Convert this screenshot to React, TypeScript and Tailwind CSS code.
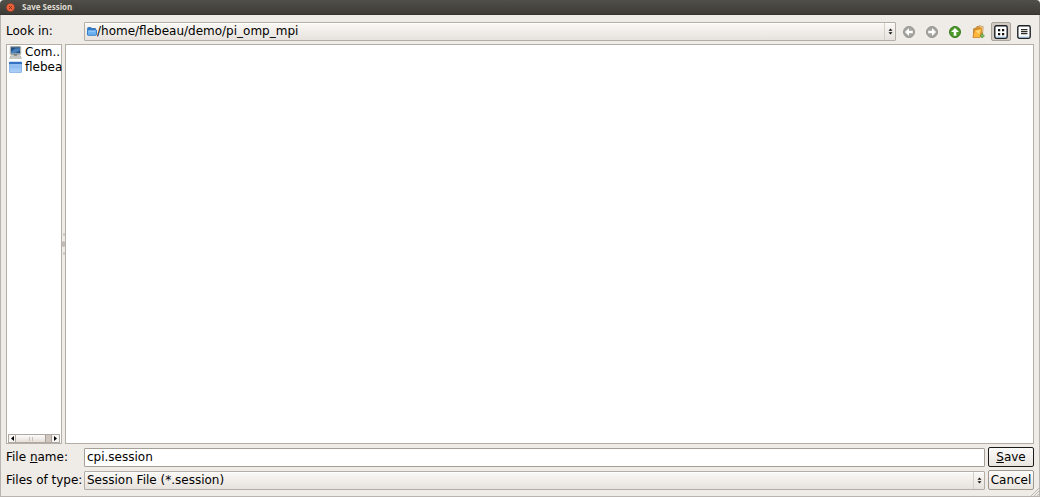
import { useState } from 'react';
import type { ReactNode } from 'react';
import clsx from 'clsx';

const path = '/home/flebeau/demo/pi_omp_mpi';

function TitleBar({ title }: { title: string }) {
    return (
        <header className="flex h-[15px] shrink-0 items-center gap-[7px] rounded-t-[4px] border-b border-[#33322e] bg-linear-to-b from-[#504f49] to-[#3d3c37] px-[6px]">
            <button aria-label="Close" className="size-[9px]">
                <svg viewBox="0 0 9 9" className="size-[9px]">
                    <circle cx="4.5" cy="4.5" r="4.2" fill="#e9603a" stroke="#6f3a28" strokeWidth=".6" />
                    <path d="M3 3l3 3M6 3L3 6" stroke="#7d3420" strokeWidth=".9" />
                </svg>
            </button>
            <h1 className="font-['Open_Sans',sans-serif] text-[8px] leading-[10px] font-bold text-[#dfdbd2]">{title}</h1>
        </header>
    );
}

function FolderIcon({ className }: { className?: string }) {
    return (
        <svg viewBox="0 0 10 9" className={className}>
            <path d="M.5 1.5q0-1 1-1h2.5l.8 1h3.7v1H.5z" fill="#2f7fd0" stroke="#1c62b0" strokeWidth=".7" />
            <path d="M.5 8V3h9v4.5q0 .8-.8.8H1z" fill="#6db2f0" stroke="#1d6cc0" strokeWidth=".8" />
            <path d="M1.5 4h7" stroke="#b6dcfb" strokeWidth=".8" />
        </svg>
    );
}

function ComputerIcon() {
    return (
        <svg viewBox="0 0 13 13" className="size-[13px] shrink-0">
            <rect x="1.3" y=".5" width="10.4" height="8" rx=".6" fill="#d5d6d2" stroke="#8b8d88" strokeWidth=".7" />
            <rect x="2" y="1.2" width="9" height="6.2" fill="#204f86" />
            <path d="M2.2 5.4l4-2.8 4.6-.4v2.2L6 7.2H2.2z" fill="#4a80b8" />
            <path d="M4.8 8.5h3.4v1.3H4.8z" fill="#555753" />
            <path d="M1.8 9.8h9.4l1.2 2.5H.6z" fill="#e4e5e2" stroke="#8b8d88" strokeWidth=".6" />
            <path d="M2.2 11h8.6" stroke="#9b9d98" strokeWidth=".6" />
        </svg>
    );
}

function HomeFolderIcon() {
    return (
        <svg viewBox="0 0 13 12" className="h-[12px] w-[13px] shrink-0">
            <defs>
                <linearGradient id="home-folder" x1="0" y1="0" x2="0" y2="1">
                    <stop offset="0" stopColor="#6fa8ea" />
                    <stop offset="1" stopColor="#b3d5fa" />
                </linearGradient>
            </defs>
            <rect x=".4" y="1" width="12.2" height="10.4" rx=".5" fill="url(#home-folder)" stroke="#6a9fdd" strokeWidth=".7" />
            <path d="M.1 1h12.8v2.2H.1z" fill="#3273c4" />
            <path d="M.8 3.9h11.4" stroke="#c5e0fc" strokeWidth=".7" />
        </svg>
    );
}

function ArrowIcon({ direction }: { direction: 'left' | 'right' | 'up' }) {
    const rotation = { left: 0, right: 180, up: 90 }[direction];
    const up = direction === 'up';
    return (
        <svg viewBox="0 0 12 12" className="size-[12px]">
            <circle cx="6" cy="6" r="5.5" fill={up ? '#4e9a2a' : '#a5a4a1'} stroke={up ? '#2d7413' : '#8f8e8b'} strokeWidth=".9" />
            <path
                d="M6 2L2 6l4 4V7.3h3.8V4.7H6z"
                fill="#fff"
                transform={`rotate(${rotation} 6 6)`}
            />
        </svg>
    );
}

function NewFolderIcon() {
    return (
        <svg viewBox="0 0 13 14" className="h-[14px] w-[13px]">
            <path d="M1.6 3.8l2.6-.9.8-1.5 1.6.3.6-1 3.9 1.1-.7 9.2-8.9 1z" fill="#dc9633" stroke="#a97227" strokeWidth=".7" />
            <path d="M7.5 1.5l2.9.8-.5 5" fill="none" stroke="#f7e8c8" strokeWidth=".9" />
            <path d="M.9 12.4L2.6 5l6.6-1.7.5 1-1.6 8.3z" fill="#ffb83c" stroke="#c67c1c" strokeWidth=".7" />
            <path d="M3.4 6l4.8-1.3-.8 4.2z" fill="#ffd67c" />
            <path d="M10.2 8.6v4.4M8 10.8h4.4" stroke="#5d9a40" strokeWidth="1.9" />
            <path d="M10.2 9.4v2.8M8.8 10.8h2.8" stroke="#8fc66d" strokeWidth=".8" />
        </svg>
    );
}

function ViewIcon({ detail }: { detail?: boolean }) {
    return (
        <svg viewBox="0 0 14 14" className="size-[14px]">
            <rect x=".8" y=".8" width="12.4" height="12.4" rx="1.6" fill="#fff" stroke="#1c2228" strokeWidth="1.4" />
            <path d="M2 12h10" stroke="#a8cdec" strokeWidth="1" />
            {detail ? (
                <>
                    <path d="M4 4h6.4v6H4z" fill="#c9c9c9" />
                    <path d="M4 4.5h6.4M4 6.5h6.4M4 8.5h6.4" stroke="#2a2a2a" strokeWidth="1" />
                </>
            ) : (
                <path d="M4 4h2.2v2.2H4zM8 4h2.2v2.2H8zM4 8h2.2v2.2H4zM8 8h2.2v2.2H8z" fill="#111" />
            )}
        </svg>
    );
}

function ToolButton({ label, pressed, onClick, children }: { label: string; pressed?: boolean; onClick?: () => void; children: ReactNode }) {
    return (
        <button
            aria-label={label}
            aria-pressed={pressed}
            onClick={onClick}
            className={clsx(
                'flex h-[19px] w-[20px] items-center justify-center rounded-[2px] border',
                pressed ? 'border-[#aaa39a] bg-[#d2cbc4]' : 'border-transparent',
            )}
        >
            {children}
        </button>
    );
}

interface ComboProps {
    id: string;
    value: string;
    icon?: ReactNode;
}

function Combo({ id, value, icon }: ComboProps) {
    return (
        <div className="relative flex h-[19px] min-w-0 flex-1 items-center rounded-[1px] border border-[#b5aea6] bg-linear-to-b from-[#faf8f6] to-[#e7e2dd] shadow-[inset_0_1px_0_#fff]">
            {icon && <span className="pointer-events-none absolute left-[2px]">{icon}</span>}
            <select
                id={id}
                defaultValue={value}
                className={clsx('h-full w-full appearance-none bg-transparent pr-[14px] pb-px outline-none', icon ? 'pl-[12px]' : 'pl-[2px]')}
            >
                <option>{value}</option>
            </select>
            <span className="pointer-events-none absolute right-0 flex h-full w-[11px] items-center justify-center border-l border-[#d5cec7]">
                <svg viewBox="0 0 5 7" className="h-[7px] w-[5px]">
                    <path d="M2.5 .4L4.5 2.7H.5zM2.5 6.6L.5 4.3h4z" fill="#111" />
                </svg>
            </span>
        </div>
    );
}

function ScrollBar() {
    return (
        <div className="mx-px flex h-[9px] shrink-0 border border-[#b0a9a1] bg-[#d0c6bf]">
            <button aria-label="Scroll left" className="flex w-[7px] shrink-0 items-center justify-center border-r border-[#b0a9a1] bg-[#f8f6f4]">
                <svg viewBox="0 0 3 5" className="h-[5px] w-[3px]"><path d="M3 0v5L0 2.5z" /></svg>
            </button>
            <div className="flex flex-1 items-center justify-center gap-[2px] bg-linear-to-b from-[#fcfbfa] to-[#e5dfda]">
                <span className="h-[4px] w-px bg-[#c8c1ba]" />
                <span className="h-[4px] w-px bg-[#c8c1ba]" />
            </div>
            <div className="w-[7px] border-x border-[#a8a098]" />
            <button aria-label="Scroll right" className="flex w-[7px] shrink-0 items-center justify-center bg-[#f8f6f4]">
                <svg viewBox="0 0 3 5" className="h-[5px] w-[3px]"><path d="M0 0v5l3-2.5z" /></svg>
            </button>
        </div>
    );
}

function Places() {
    return (
        <aside className="flex w-[56px] shrink-0 flex-col border border-[#b5aea6] bg-white">
            <ul className="flex-1">
                <li className="flex h-[14px] items-center gap-[3px] pl-[2px]">
                    <ComputerIcon />
                    <span className="whitespace-nowrap">Com..</span>
                </li>
                <li className="flex h-[15px] items-center gap-[3px] pl-[2px]">
                    <HomeFolderIcon />
                    <span className="whitespace-nowrap">flebea</span>
                </li>
            </ul>
            <ScrollBar />
        </aside>
    );
}

function Splitter() {
    return (
        <div className="flex w-[3px] shrink-0 flex-col items-center justify-center gap-[5px]">
            <span className="h-[3px] w-[2px] rounded-full bg-[#cbc6c1]" />
            <span className="h-[6px] w-[3px] rounded-full bg-[#c2bdb8]" />
            <span className="h-[3px] w-[2px] rounded-full bg-[#cbc6c1]" />
        </div>
    );
}

const labelClass = 'w-[78px] shrink-0 pb-px whitespace-nowrap';
const buttonClass = 'ml-[3px] h-[20px] w-[46px] shrink-0 rounded-[2px] border bg-linear-to-b from-[#fcfbfa] to-[#e9e4df] pb-px text-center';

export default function App() {
    const [detail, setDetail] = useState(false);
    const [fileName, setFileName] = useState('cpi.session');

    return (
        <div className="flex min-h-screen flex-col bg-white font-['DejaVu_Sans',sans-serif] text-[12px] leading-[14px] text-black">
            <TitleBar title="Save Session" />
            <main className="relative flex flex-1 flex-col border-x border-b border-[#b9b4af] bg-[#efebe7] px-[5px] pt-[7px] pb-[6px]">
                <div className="flex items-center">
                    <label htmlFor="look-in" className={labelClass}>Look in:</label>
                    <Combo id="look-in" value={path} icon={<FolderIcon className="h-[9px] w-[10px]" />} />
                    <div className="ml-[3px] flex gap-[3px]">
                        <ToolButton label="Back"><ArrowIcon direction="left" /></ToolButton>
                        <ToolButton label="Forward"><ArrowIcon direction="right" /></ToolButton>
                        <ToolButton label="Parent Directory"><ArrowIcon direction="up" /></ToolButton>
                        <ToolButton label="Create New Folder"><NewFolderIcon /></ToolButton>
                        <ToolButton label="List View" pressed={!detail} onClick={() => setDetail(false)}><ViewIcon /></ToolButton>
                        <ToolButton label="Detail View" pressed={detail} onClick={() => setDetail(true)}><ViewIcon detail /></ToolButton>
                    </div>
                </div>

                <div className="mt-[3px] flex flex-1">
                    <Places />
                    <Splitter />
                    <section aria-label="Files" className="flex-1 border border-[#b5aea6] bg-white" />
                </div>

                <div className="mt-[3px] flex items-center">
                    <label htmlFor="file-name" className={labelClass}>File <u>n</u>ame:</label>
                    <input
                        id="file-name"
                        value={fileName}
                        onChange={(e) => setFileName(e.target.value)}
                        className="h-[19px] min-w-0 flex-1 rounded-[1px] border border-[#a69f97] bg-white px-[2px] pb-px outline-none"
                    />
                    <button className={clsx(buttonClass, 'border-[#1d1c1a]')}><u>S</u>ave</button>
                </div>
                <div className="mt-[3px] flex items-center">
                    <label htmlFor="file-type" className={labelClass}>Files of type:</label>
                    <Combo id="file-type" value="Session File (*.session)" />
                    <button className={clsx(buttonClass, 'border-[#a0988f]')}>Cancel</button>
                </div>

                <svg viewBox="0 0 8 8" className="pointer-events-none absolute right-0 bottom-0 size-[8px]">
                    <path d="M0 8l8-8M3 8l5-5M6 8l2-2" stroke="#bcb6b0" strokeWidth="1" />
                </svg>
            </main>
        </div>
    );
}
